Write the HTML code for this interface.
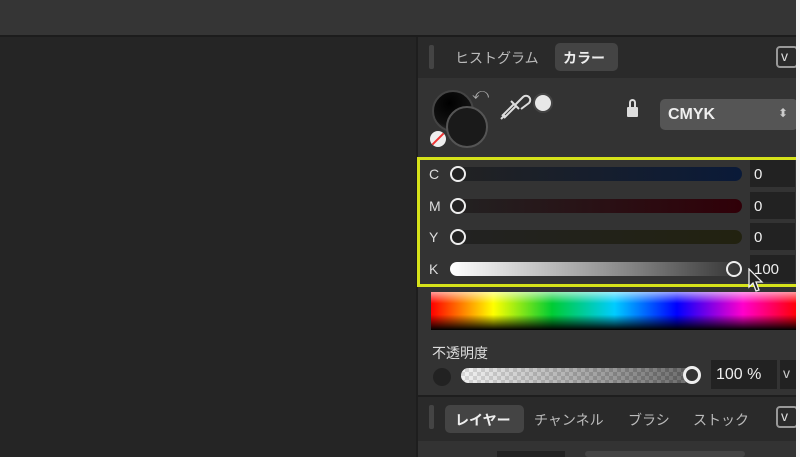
<!DOCTYPE html><html><head><style>
body{margin:0;width:800px;height:457px;background:#252525;position:relative;overflow:hidden;font-family:"Liberation Sans","Noto Sans CJK JP",sans-serif;color:#ddd}
div{position:absolute;box-sizing:border-box}
.t{font-size:14px;white-space:nowrap}
.lab{font-size:14px;left:429px;color:#ddd}
.track{left:450px;width:292px;height:14px;border-radius:7px}
.knob{width:16px;height:16px;border-radius:50%;border:2px solid #eee}
.val{left:750px;width:45px;height:27px;background:#222;font-size:15px;padding:6px 0 0 4px;color:#eee}
</style></head><body>
<div style="left:0;top:0;width:800px;height:35px;background:#353535"></div>
<div style="left:0;top:35px;width:800px;height:2px;background:#1c1c1c"></div>
<div style="left:416px;top:37px;width:2px;height:420px;background:#1e1e1e"></div>
<div style="left:418px;top:37px;width:380px;height:41px;background:#2a2a2a"></div>
<div style="left:429px;top:45px;width:5px;height:24px;background:#444;border-radius:2px"></div>
<div class="t" style="left:455px;top:48px;color:#bbb">ヒストグラム</div>
<div style="left:555px;top:43px;width:63px;height:28px;background:#444;border-radius:5px"></div>
<div class="t" style="left:563px;top:48px;color:#eee;font-weight:bold">カラー</div>
<div style="left:776px;top:46px;width:22px;height:22px;border:2px solid #999;border-radius:4px;font-size:14px;color:#ddd;padding-left:3px">v</div>
<div style="left:418px;top:78px;width:380px;height:317px;background:#333"></div>
<div style="left:432px;top:90px;width:42px;height:42px;border-radius:50%;background:radial-gradient(circle at 40% 30%,#000,#111 60%,#555);border:2px solid #444"></div>
<div style="left:446px;top:106px;width:42px;height:42px;border-radius:50%;background:#1a1a1a;border:2px solid #555"></div>
<div style="left:430px;top:131px;width:16px;height:16px;border-radius:50%;background:#eee;overflow:hidden"><div style="left:7px;top:-2px;width:2px;height:20px;background:#e33;transform:rotate(45deg)"></div></div>
<div class="t" style="left:472px;top:86px;font-size:16px;color:#aaa">⤺</div>
<svg style="position:absolute;left:498px;top:88px" width="36" height="36"><path d="M4 28 L16 16 M6 30 L18 18 M3 31 L7 27 M13 13 L21 21 M17 17 L25 9 a4 4 0 0 1 6 6 L23 21" stroke="#ddd" stroke-width="2" fill="none"/></svg>
<div style="left:533px;top:93px;width:20px;height:20px;border-radius:50%;background:#e8e8e8;border:2px solid #444"></div>
<div style="left:627px;top:107px;width:11px;height:10px;background:#ddd;border-radius:1px"></div>
<div style="left:629px;top:99px;width:7px;height:10px;border:2px solid #ddd;border-bottom:none;border-radius:4px 4px 0 0"></div>
<div style="left:660px;top:99px;width:138px;height:31px;background:#555;border-radius:5px"></div>
<div class="t" style="left:668px;top:106px;font-size:16px;font-weight:bold;color:#eee">CMYK</div>
<div class="t" style="left:778px;top:106px;font-size:12px;color:#ccc">⬍</div>
<div style="left:417px;top:157px;width:383px;height:130px;border:3px solid #d6e21a"></div>
<div class="lab" style="top:166px">C</div><div class="track" style="top:167px;background:linear-gradient(90deg,#222,#0a1a38)"></div><div class="knob" style="left:450px;top:166px"></div><div class="val" style="top:160px">0</div>
<div class="lab" style="top:198px">M</div><div class="track" style="top:199px;background:linear-gradient(90deg,#222,#300008)"></div><div class="knob" style="left:450px;top:198px"></div><div class="val" style="top:192px">0</div>
<div class="lab" style="top:229px">Y</div><div class="track" style="top:230px;background:linear-gradient(90deg,#222,#222210)"></div><div class="knob" style="left:450px;top:229px"></div><div class="val" style="top:223px">0</div>
<div class="lab" style="top:261px">K</div><div class="track" style="top:262px;background:linear-gradient(90deg,#fff,#888 60%,#333)"></div><div class="knob" style="left:726px;top:261px"></div><div class="val" style="top:255px">100</div>
<div style="left:431px;top:292px;width:367px;height:38px;background:linear-gradient(180deg,rgba(255,255,255,.6),rgba(255,255,255,0) 30%,rgba(0,0,0,0) 60%,#000),linear-gradient(90deg,#f00,#ff0 17%,#0c3 33%,#0cf 50%,#00f 67%,#f0c 85%,#f00)"></div>
<div class="t" style="left:432px;top:343px;color:#ddd">不透明度</div>
<div style="left:433px;top:368px;width:18px;height:18px;border-radius:50%;background:#222"></div>
<div style="left:461px;top:368px;width:230px;height:15px;border-radius:8px;background:repeating-conic-gradient(#999 0 25%,#ddd 0 50%) 0 0/8px 8px"></div>
<div style="left:461px;top:368px;width:230px;height:15px;border-radius:8px;background:linear-gradient(90deg,rgba(255,255,255,.6),rgba(60,60,60,.7))"></div>
<div style="left:683px;top:366px;width:18px;height:18px;border-radius:50%;border:3px solid #eee;background:#333"></div>
<div style="left:711px;top:360px;width:66px;height:29px;background:#222;font-size:16px;padding:6px 0 0 5px;color:#eee">100 %</div>
<div style="left:780px;top:360px;width:18px;height:29px;background:#222;color:#ccc;font-size:14px;padding:5px 0 0 3px">v</div>
<div style="left:418px;top:395px;width:380px;height:2px;background:#1e1e1e"></div>
<div style="left:418px;top:397px;width:380px;height:44px;background:#2a2a2a"></div>
<div style="left:429px;top:405px;width:5px;height:24px;background:#444;border-radius:2px"></div>
<div style="left:445px;top:405px;width:79px;height:28px;background:#444;border-radius:5px"></div>
<div class="t" style="left:455px;top:410px;color:#eee;font-weight:bold">レイヤー</div>
<div class="t" style="left:534px;top:410px;color:#bbb">チャンネル</div>
<div class="t" style="left:628px;top:410px;color:#bbb">ブラシ</div>
<div class="t" style="left:693px;top:410px;color:#bbb">ストック</div>
<div style="left:776px;top:406px;width:22px;height:22px;border:2px solid #999;border-radius:4px;font-size:14px;color:#ddd;padding-left:3px">v</div>
<div style="left:418px;top:441px;width:380px;height:16px;background:#333"></div>
<div style="left:497px;top:451px;width:68px;height:6px;background:#222"></div>
<div style="left:585px;top:451px;width:160px;height:6px;background:#444;border-radius:3px"></div>
<div style="left:796px;top:0;width:4px;height:457px;background:#f2f2f2"></div>
<svg style="position:absolute;left:748px;top:268px" width="16" height="26"><path d="M1 1 L1 19 L5 15 L8 23 L11 22 L8 14 L14 14 Z" fill="#222" stroke="#eee" stroke-width="1.3"/></svg>
</body></html>
